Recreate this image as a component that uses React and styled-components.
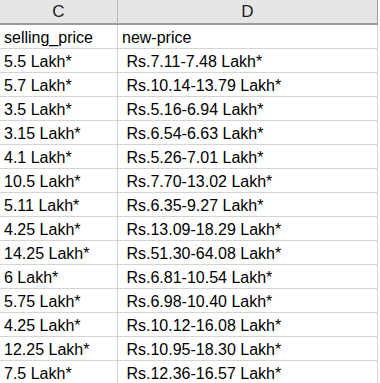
import React from "react";
import styled, { createGlobalStyle } from "styled-components";

const rows = [
  ["selling_price", "new-price"],
  ["5.5 Lakh*", " Rs.7.11-7.48 Lakh*"],
  ["5.7 Lakh*", " Rs.10.14-13.79 Lakh*"],
  ["3.5 Lakh*", " Rs.5.16-6.94 Lakh*"],
  ["3.15 Lakh*", " Rs.6.54-6.63 Lakh*"],
  ["4.1 Lakh*", " Rs.5.26-7.01 Lakh*"],
  ["10.5 Lakh*", " Rs.7.70-13.02 Lakh*"],
  ["5.11 Lakh*", " Rs.6.35-9.27 Lakh*"],
  ["4.25 Lakh*", " Rs.13.09-18.29 Lakh*"],
  ["14.25 Lakh*", " Rs.51.30-64.08 Lakh*"],
  ["6 Lakh*", " Rs.6.81-10.54 Lakh*"],
  ["5.75 Lakh*", " Rs.6.98-10.40 Lakh*"],
  ["4.25 Lakh*", " Rs.10.12-16.08 Lakh*"],
  ["12.25 Lakh*", " Rs.10.95-18.30 Lakh*"],
  ["7.5 Lakh*", " Rs.12.36-16.57 Lakh*"],
];

const GlobalStyle = createGlobalStyle`
  body {
    margin: 0;
    background: #ffffff;
    font-family: "Liberation Sans", Arial, sans-serif;
  }
`;

const Sheet = styled.div`
  display: grid;
  grid-template-columns: 118px 260px;
  width: 378px;
  height: 383px;
  overflow: hidden;
  align-content: start;
`;

const HeadCell = styled.div`
  height: 25px;
  box-sizing: border-box;
  background: #e6e6e6;
  border-bottom: 2px solid #9b9b9b;
  border-right: 1px solid ${(p) => (p.last ? "#9b9b9b" : "#bdbdbd")};
  display: flex;
  align-items: center;
  justify-content: center;
  font-size: 17px;
  color: #222222;
  padding-top: 1px;
`;

const Cell = styled.div`
  height: 24px;
  box-sizing: border-box;
  border-bottom: 1px solid #d4d4d4;
  border-right: 1px solid #d4d4d4;
  display: flex;
  align-items: flex-end;
  padding: 0 0 1px 4px;
  font-size: 16px;
  line-height: 18px;
  color: #000000;
  white-space: pre;
`;

export default function App() {
  return (
    <>
      <GlobalStyle />
      <Sheet>
        <HeadCell>C</HeadCell>
        <HeadCell last>D</HeadCell>
        {rows.map(([c, d], i) => (
          <React.Fragment key={i}>
            <Cell>{c}</Cell>
            <Cell>{d}</Cell>
          </React.Fragment>
        ))}
      </Sheet>
    </>
  );
}
